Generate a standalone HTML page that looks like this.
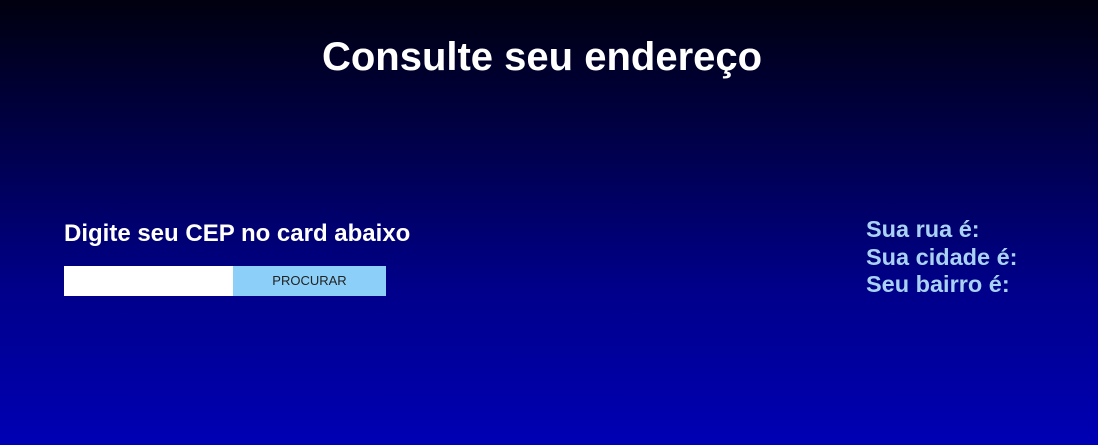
<!DOCTYPE html>
<html><head><style>
html,body{margin:0;padding:0;}
body{width:1098px;height:445px;overflow:hidden;background:linear-gradient(to bottom,#00000f 0%,#000046 30%,#00008a 65%,#0000b4 100%);font-family:"Liberation Sans",Arial,sans-serif;position:relative;}
h1{position:absolute;left:0;width:1084px;top:35px;margin:0;text-align:center;color:#fff;font-size:40px;font-weight:bold;line-height:44px;}
.sub{position:absolute;left:64px;top:220px;color:#fff;font-size:24px;font-weight:bold;line-height:28px;}
.inp{position:absolute;left:64px;top:266px;width:169px;height:30px;background:#fff;}
.btn{position:absolute;left:233px;top:266px;width:153px;height:30px;background:#8ccff8;color:#222;font-size:13px;line-height:30px;text-align:center;}
.res{position:absolute;left:866px;top:216px;color:#a9d2f2;font-size:23.5px;font-weight:bold;line-height:27.5px;}
</style></head><body>
<h1>Consulte seu endereço</h1>
<div class="sub">Digite seu CEP no card abaixo</div>
<div class="inp"></div>
<div class="btn">PROCURAR</div>
<div class="res">Sua rua é:<br>Sua cidade é:<br>Seu bairro é:</div>
</body></html>
